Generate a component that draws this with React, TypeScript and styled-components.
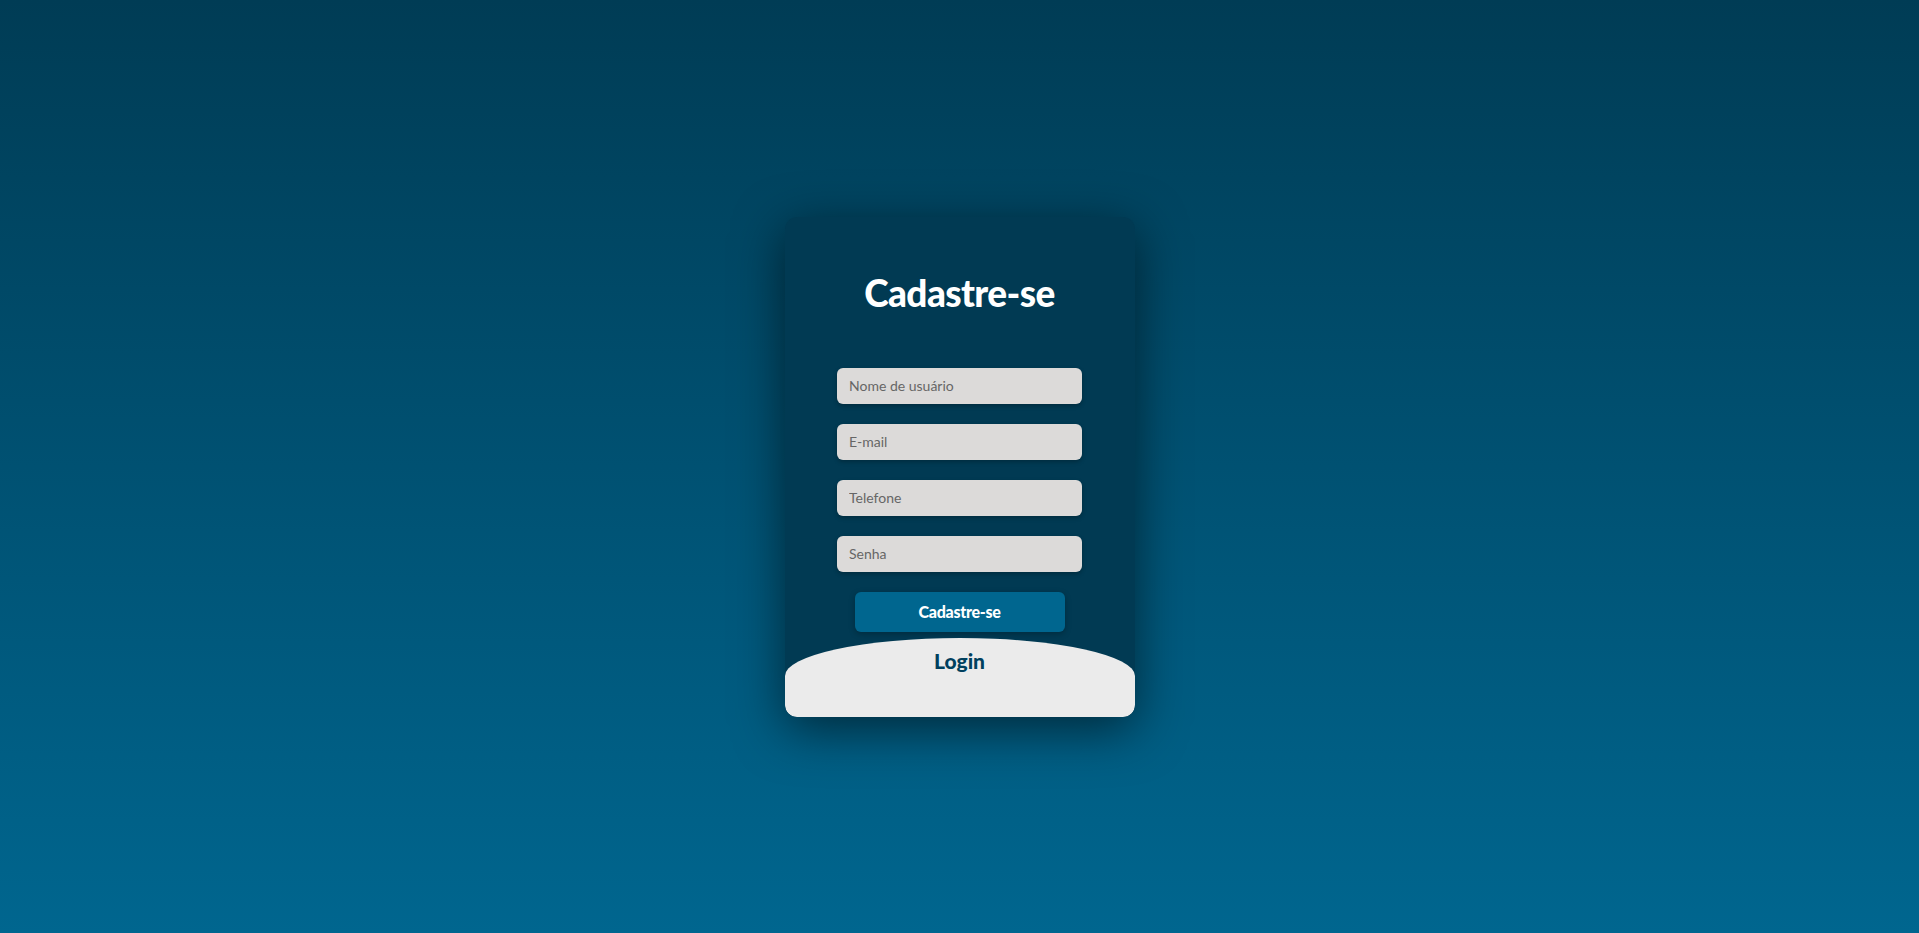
import styled, { createGlobalStyle } from 'styled-components';

const GlobalStyle = createGlobalStyle`
  * {
    box-sizing: border-box;
  }
  html, body {
    margin: 0;
    padding: 0;
    height: 100%;
  }
  body {
    font-family: 'Lato', 'Noto Sans', sans-serif;
  }
  #root {
    height: 100%;
  }
`;

const Page = styled.div`
  display: flex;
  justify-content: center;
  align-items: center;
  width: 100vw;
  height: 100vh;
  background: linear-gradient(180deg, #003c55 0%, #00668f 100%);
`;

const Card = styled.form`
  display: flex;
  flex-direction: column;
  align-items: center;
  width: 350px;
  height: 500px;
  border-radius: 12px;
  background-color: #013a53;
  box-shadow: 0 12px 50px rgba(0, 0, 0, 0.55);
  overflow: hidden;
`;

const Title = styled.h1`
  margin: 56px 0 55px;
  height: 40px;
  line-height: 40px;
  font-size: 37px;
  font-weight: 900;
  color: #ffffff;
  letter-spacing: -0.6px;
`;

const Fields = styled.div`
  display: flex;
  flex-direction: column;
  gap: 20px;
`;

const Input = styled.input`
  width: 245px;
  height: 36px;
  padding: 0 12px;
  border: none;
  border-radius: 6px;
  background-color: #dcdad9;
  box-shadow: 0 2px 4px rgba(0, 0, 0, 0.25);
  font-family: 'Lato', 'Noto Sans', sans-serif;
  font-size: 14px;
  color: #333;

  &::placeholder {
    color: #666666;
  }
  &:focus {
    outline: none;
  }
`;

const SubmitButton = styled.button`
  margin-top: 20px;
  width: 210px;
  height: 40px;
  border: none;
  border-radius: 6px;
  background-color: #00668f;
  box-shadow: 0 2px 6px rgba(0, 0, 0, 0.25);
  color: #ffffff;
  font-family: 'Lato', 'Noto Sans', sans-serif;
  font-size: 16px;
  font-weight: 900;
  letter-spacing: -0.3px;
  cursor: pointer;
`;

const LoginArea = styled.div`
  margin-top: 6px;
  display: flex;
  justify-content: center;
  width: 100%;
  flex: 1;
  padding-top: 10px;
  background-color: #ebebeb;
  border-radius: 50% 50% 12px 12px / 38px 38px 12px 12px;
`;

const LoginLabel = styled.span`
  font-size: 21px;
  font-weight: 900;
  color: #00405e;
  cursor: pointer;
`;

function App() {
  return (
    <>
      <GlobalStyle />
      <Page>
        <Card onSubmit={(e) => e.preventDefault()}>
          <Title>Cadastre-se</Title>
          <Fields>
            <Input type="text" placeholder="Nome de usuário" />
            <Input type="email" placeholder="E-mail" />
            <Input type="tel" placeholder="Telefone" />
            <Input type="password" placeholder="Senha" />
          </Fields>
          <SubmitButton type="submit">Cadastre-se</SubmitButton>
          <LoginArea>
            <LoginLabel>Login</LoginLabel>
          </LoginArea>
        </Card>
      </Page>
    </>
  );
}

export default App;
